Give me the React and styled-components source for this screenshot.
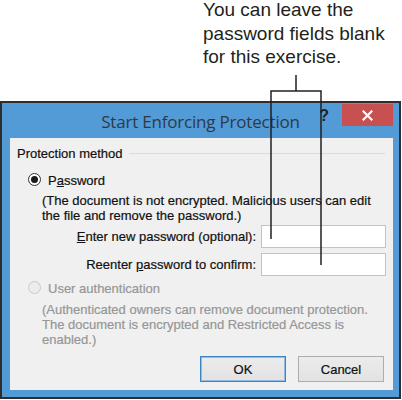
import styled, { createGlobalStyle } from 'styled-components'

const GlobalStyle = createGlobalStyle`
  html, body {
    margin: 0;
    padding: 0;
    background: #ffffff;
  }
`

const Page = styled.div`
  position: relative;
  width: 402px;
  height: 400px;
  overflow: hidden;
  background: #ffffff;
`

const Caption = styled.div`
  box-sizing: border-box;
  height: 101px;
  display: flex;
  flex-direction: column;
  padding: 0 0 0 203px;
`

const CaptionText = styled.p`
  margin: -2px 0 0 0;
  font-family: "Liberation Sans", Arial, sans-serif;
  font-size: 19px;
  line-height: 23.5px;
  color: #231f20;
`

const Callout = styled.svg`
  position: absolute;
  top: 0;
  left: 0;
  pointer-events: none;
`

const Frame = styled.div`
  box-sizing: border-box;
  width: 401px;
  border: 2px solid #2e2e2e;
  background: #529bd7;
  font-family: "Liberation Sans", Arial, sans-serif;
`

const TitleBar = styled.div`
  height: 35px;
  display: grid;
  grid-template-columns: 1fr auto 1fr;
  padding: 0 6px;
`

const Title = styled.div`
  align-self: center;
  padding-top: 1px;
  font-family: "Open Sans", "Noto Sans", sans-serif;
  font-size: 17px;
  letter-spacing: -0.2px;
  color: #2f3a45;
`

const TitleControls = styled.div`
  display: flex;
  justify-content: flex-end;
  align-items: flex-start;
  gap: 13px;
  padding-top: 1px;
`

const Help = styled.span`
  margin-top: 3px;
  font-weight: 700;
  font-size: 16px;
  line-height: 18px;
  color: #222;
`

const Close = styled.div`
  width: 51px;
  height: 22px;
  background: #c75050;
  display: flex;
  align-items: center;
  justify-content: center;
`

const Body = styled.div`
  padding: 0 6px 7px 8px;
`

const Panel = styled.div`
  box-sizing: border-box;
  background: #f0f0f0;
  padding: 8px 7px 8px 7px;
  font-size: 13px;
  line-height: 15px;
  color: #111;
  -webkit-text-stroke: 0.2px currentColor;
  display: flex;
  flex-direction: column;
`

const GroupHeader = styled.div`
  display: flex;
  align-items: center;
  gap: 6px;
  padding-right: 1px;
  &::after {
    content: '';
    flex: 1;
    height: 1px;
    background: #dadada;
  }
`

const RadioRow = styled.label`
  display: flex;
  align-items: center;
  gap: 7px;
  padding-left: 11px;
  margin-top: ${(p) => p.$top}px;
  color: ${(p) => (p.$disabled ? '#969696' : '#111')};
`

const RadioDot = styled.span`
  box-sizing: border-box;
  width: 13px;
  height: 13px;
  border-radius: 50%;
  border: 1px solid ${(p) => (p.$disabled ? '#c9c9c9' : '#333')};
  background: ${(p) => (p.$disabled ? '#ececec' : '#fff')};
  display: flex;
  align-items: center;
  justify-content: center;
  margin-top: -2px;
  &::after {
    content: '';
    width: 7px;
    height: 7px;
    border-radius: 50%;
    background: ${(p) => (p.$checked ? '#1a1a1a' : 'transparent')};
  }
`

const Note = styled.p`
  margin: ${(p) => p.$top}px 0 0 0;
  padding-left: 25px;
  color: ${(p) => (p.$disabled ? '#969696' : '#111')};
`

const Fields = styled.div`
  display: grid;
  grid-template-columns: 239px 125px;
  column-gap: 5px;
  row-gap: 5px;
  align-items: center;
  margin-top: 2px;
`

const FieldLabel = styled.label`
  text-align: right;
  white-space: nowrap;
`

const Input = styled.div`
  box-sizing: border-box;
  height: 23px;
  background: #ffffff;
  border: 1px solid #c3c3c3;
`

const Buttons = styled.div`
  display: flex;
  justify-content: flex-end;
  gap: 12px;
  margin-top: 9px;
  padding-right: 2px;
`

const Button = styled.div`
  box-sizing: border-box;
  width: 86px;
  height: 26px;
  display: flex;
  align-items: center;
  justify-content: center;
  background: linear-gradient(#ececec, #e2e2e2);
  border: 1px solid ${(p) => (p.$primary ? '#3c83c2' : '#adadad')};
  box-shadow: ${(p) => (p.$primary ? 'inset 0 0 0 1px #8fbde6' : 'none')};
  font-size: 13px;
  color: #111;
`

function CloseIcon() {
  return (
    <svg width="11" height="11" viewBox="0 0 11 11">
      <path d="M1.5 1.5 L9.5 9.5 M9.5 1.5 L1.5 9.5" stroke="#fff" strokeWidth="2.2" strokeLinecap="square" />
    </svg>
  )
}

function App() {
  return (
    <Page>
      <GlobalStyle />
      <Caption>
        <CaptionText>
          You can leave the
          <br />
          password fields blank
          <br />
          for this exercise.
        </CaptionText>
      </Caption>
      <Frame>
        <TitleBar>
          <span />
          <Title>Start Enforcing Protection</Title>
          <TitleControls>
            <Help>?</Help>
            <Close>
              <CloseIcon />
            </Close>
          </TitleControls>
        </TitleBar>
        <Body>
          <Panel>
            <GroupHeader>Protection method</GroupHeader>
            <RadioRow $top={12}>
              <RadioDot $checked />
              <span>
                P<u>a</u>ssword
              </span>
            </RadioRow>
            <Note $top={5}>
              (The document is not encrypted. Malicious users can edit
              <br />
              the file and remove the password.)
            </Note>
            <Fields>
              <FieldLabel>
                <u>E</u>nter new password (optional):
              </FieldLabel>
              <Input />
              <FieldLabel>
                Reenter <u>p</u>assword to confirm:
              </FieldLabel>
              <Input />
            </Fields>
            <RadioRow $top={5} $disabled>
              <RadioDot $disabled />
              <span>User authentication</span>
            </RadioRow>
            <Note $top={6} $disabled>
              (Authenticated owners can remove document protection.
              <br />
              The document is encrypted and Restricted Access is
              <br />
              enabled.)
            </Note>
            <Buttons>
              <Button $primary>OK</Button>
              <Button>Cancel</Button>
            </Buttons>
          </Panel>
        </Body>
      </Frame>
      <Callout width="402" height="400" viewBox="0 0 402 400">
        <path
          d="M296 75 V91 M271 239 V91 H321 V265"
          fill="none"
          stroke="#231f20"
          strokeWidth="1.5"
        />
      </Callout>
    </Page>
  )
}

export default App
